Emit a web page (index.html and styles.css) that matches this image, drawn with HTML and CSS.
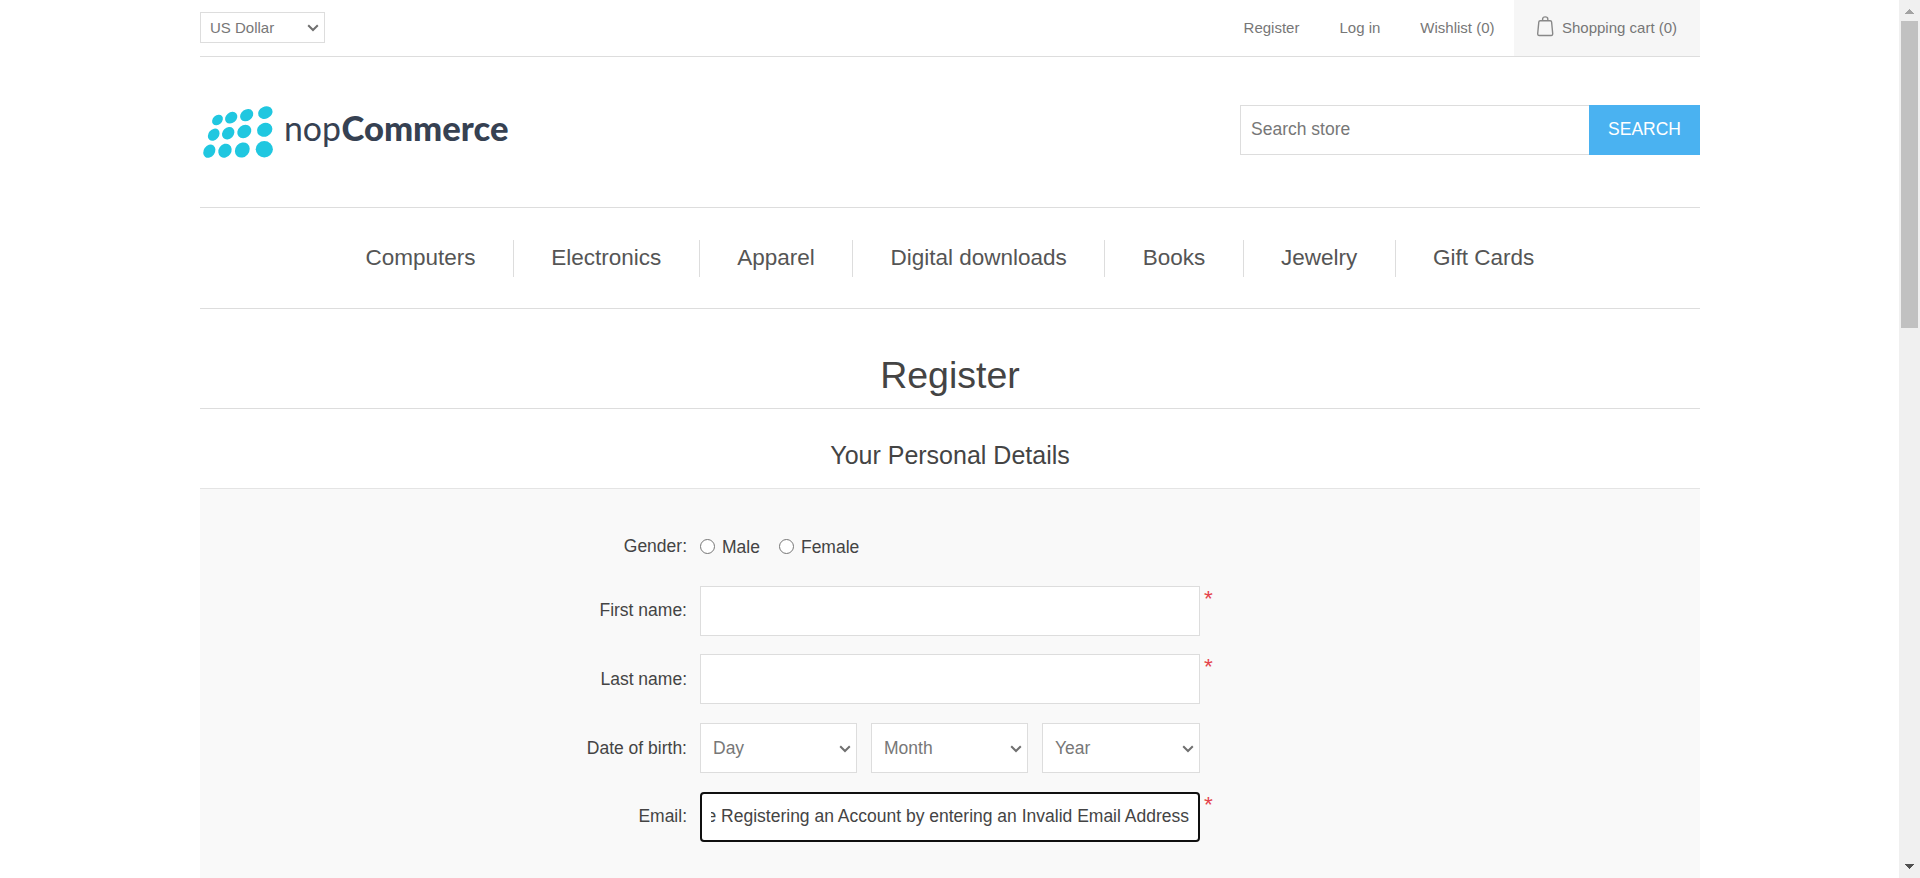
FILE: index.html
```html
<!DOCTYPE html>
<html lang="en">
<head>
<meta charset="utf-8">
<title>Register</title>
<link rel="stylesheet" href="styles.css">
</head>
<body>
<div class="page">
  <div class="wrap">
    <div class="topbar">
      <div class="select currency"><span>US Dollar</span><svg class="chev" width="12" height="8" viewBox="0 0 12 8"><path d="M1.2 1.2 6 6 10.8 1.2"/></svg></div>
      <div class="links">
        <a>Register</a><a>Log in</a><a>Wishlist (0)</a>
        <a class="cart"><svg width="18" height="21" viewBox="0 0 18 21"><path d="M4.200 4.800h10q1.300 0 1.400 1.200l1.100 11.500q.1 2-1.600 2H3.300q-1.700 0-1.600-2L2.800 6q.1-1.200 1.400-1.200zM6.600 4.600V3q0-2.100 2.600-2.100T11.800 3v1.600"/></svg>Shopping cart (0)</a>
      </div>
    </div>
    <header class="header">
      <svg class="logo" width="312" height="62" viewBox="200 100 312 62">
        <g fill="#20c7e0">
          <ellipse cx="217.500" cy="120" rx="6" ry="4.600" transform="rotate(-42 217.500 120)"/>
          <ellipse cx="231.200" cy="117.700" rx="6.700" ry="5.300" transform="rotate(-40 231.200 117.700)"/>
          <ellipse cx="246.700" cy="115.200" rx="7.100" ry="5.600" transform="rotate(-35 246.700 115.200)"/>
          <ellipse cx="265.300" cy="112.600" rx="7.500" ry="6" transform="rotate(-25 265.300 112.600)"/>
          <ellipse cx="213.700" cy="134.700" rx="6.700" ry="5.200" transform="rotate(-50 213.700 134.700)"/>
          <ellipse cx="228.200" cy="133.200" rx="6.800" ry="5.600" transform="rotate(-45 228.200 133.200)"/>
          <ellipse cx="244.300" cy="131.500" rx="7.500" ry="6.300" transform="rotate(-40 244.300 131.500)"/>
          <ellipse cx="264.700" cy="129.800" rx="7.900" ry="6.800" transform="rotate(-25 264.700 129.800)"/>
          <ellipse cx="209.300" cy="151.200" rx="7.100" ry="5.600" transform="rotate(-55 209.300 151.200)"/>
          <ellipse cx="225" cy="150.700" rx="7.400" ry="6.300" transform="rotate(-55 225 150.700)"/>
          <ellipse cx="242.300" cy="150" rx="8" ry="7" transform="rotate(-50 242.300 150)"/>
          <ellipse cx="264.300" cy="149.300" rx="8.600" ry="8.200"/>
        </g>
        <text class="logo-nop" x="284" y="140.500" textLength="57" lengthAdjust="spacingAndGlyphs">nop</text>
        <text class="logo-com" x="341.500" y="140.500" textLength="167" lengthAdjust="spacingAndGlyphs">Commerce</text>
      </svg>
      <form class="search">
        <input type="text" placeholder="Search store"><button type="button">SEARCH</button>
      </form>
    </header>
    <nav class="menu">
      <a>Computers</a><a>Electronics</a><a>Apparel</a><a>Digital downloads</a><a>Books</a><a>Jewelry</a><a>Gift Cards</a>
    </nav>
    <h1>Register</h1>
    <h2>Your Personal Details</h2>
    <div class="fields">
      <div class="row gender"><label>Gender:</label><i class="radio"></i><span class="male">Male</span><i class="radio"></i><span>Female</span></div>
      <div class="row first"><label>First name:</label><input type="text" class="box"><b>*</b></div>
      <div class="row last"><label>Last name:</label><input type="text" class="box"><b>*</b></div>
      <div class="row dob"><label>Date of birth:</label>
        <div class="dates">
          <div class="select"><span>Day</span><svg class="chev" width="12" height="8" viewBox="0 0 12 8"><path d="M1.200 1.200 6 6 10.800 1.200"/></svg></div>
          <div class="select"><span>Month</span><svg class="chev" width="12" height="8" viewBox="0 0 12 8"><path d="M1.200 1.200 6 6 10.800 1.200"/></svg></div>
          <div class="select"><span>Year</span><svg class="chev" width="12" height="8" viewBox="0 0 12 8"><path d="M1.200 1.200 6 6 10.800 1.200"/></svg></div>
        </div>
      </div>
      <div class="row email"><label>Email:</label><div class="box focus"><div class="clip"><span>e Registering an Account by entering an Invalid Email Address</span></div></div><b>*</b></div>
    </div>
  </div>
  <div class="scrollbar">
    <svg width="9" height="5" viewBox="0 0 9 5"><path fill="#a3a3a3" d="M4 0h1v1h1v1h1v1h1v1h1v1H0V4h1V3h1V2h1V1h1z"/></svg>
    <div class="thumb"></div>
    <svg class="down" width="9" height="5" viewBox="0 0 9 5"><path fill="#505050" d="M0 0h9v1H8v1H7v1H6v1H5v1H4V4H3V3H2V2H1V1H0z"/></svg>
  </div>
</div>
</body>
</html>
```
FILE: styles.css
```css
* { box-sizing: border-box; }
body {
  margin: 0;
  background: #fff;
  font: 17.5px "Liberation Sans", Arial, sans-serif;
  color: #444;
  overflow: hidden;
}
.page { display: flex; height: 878px; overflow: hidden; }
.wrap { width: 1500px; margin: 0 199px 0 200px; flex: none; }
.topbar {
  height: 57px;
  border-bottom: 1px solid #ddd;
  display: flex;
  justify-content: space-between;
  font-size: 15px;
  color: #777;
}
.select {
  display: flex;
  align-items: center;
  justify-content: space-between;
  background: #fff;
  border: 1px solid #ddd;
  color: #777;
}
.currency { width: 125px; height: 31px; margin-top: 12px; padding: 0 5px 0 9px; }
.chev { fill: none; stroke: #707070; stroke-width: 2; }
.links { display: flex; line-height: 56px; }
.links a { margin-right: 40px; white-space: nowrap; }
.links a:nth-child(3) { margin-right: 19.5px; }
.links .cart {
  width: 186px;
  margin: 0;
  padding-left: 22px;
  background: #f6f6f6;
  display: flex;
}
.cart svg { margin: 16px 8px 0 0; fill: none; stroke: #888; stroke-width: 1.4; }
.header { height: 150px; display: flex; justify-content: space-between; }
.logo { margin-top: 43px; }
.logo text { font-family: Lato, "Open Sans", sans-serif; font-size: 35px; fill: #364152; }
.logo .logo-com { font-weight: 900; }
.search { display: flex; height: 50px; margin-top: 48px; }
.search input {
  width: 349px;
  border: 1px solid #ddd;
  border-right: 0;
  padding: 0 10px 2px;
  font: inherit;
}
.search input::placeholder { color: #777; opacity: 1; }
.search button {
  width: 111px;
  border: 0;
  padding: 0 0 2px;
  background: #4ab2f1;
  color: #fff;
  font: inherit;
}
.menu {
  height: 102px;
  border: solid #ddd;
  border-width: 1px 0;
  display: flex;
  justify-content: center;
  align-items: center;
  font-size: 22.5px;
  color: #555;
}
.menu a { height: 37px; line-height: 36px; padding: 0 37.5px 0 37.3px; border-left: 1px solid #ddd; }
.menu a:first-child { border: 0; }
h1 {
  margin: 0;
  height: 100px;
  padding-top: 44px;
  border-bottom: 1px solid #ddd;
  font-size: 37.5px;
  line-height: 44px;
  font-weight: 400;
  text-align: center;
}
h2 {
  margin: 0;
  height: 79px;
  padding-top: 32px;
  font-size: 25px;
  line-height: 29px;
  font-weight: 400;
  text-align: center;
}
.fields { height: 400px; border-top: 1px solid #e4e4e4; background: #f9f9f9; padding-top: 37px; }
.row { display: flex; height: 50px; }
.row label { width: 487px; margin-right: 13px; text-align: right; line-height: 48px; }
.gender { height: 41px; align-items: center; margin-bottom: 19px; }
.gender label { line-height: 20px; padding-bottom: 1px; }
.gender span { padding-top: 1px; }
.radio { width: 15px; height: 15px; border: 1px solid #767676; border-radius: 50%; background: #fff; margin-right: 7px; }
.male { margin-right: 19px; }
.first { margin-bottom: 18px; }
.last { margin-bottom: 19px; }
.last label, .dob label { line-height: 50px; }
.dob { margin-bottom: 19px; }
.box { width: 500px; height: 50px; background: #fff; border: 1px solid #ddd; padding: 0; }
.row b { font-weight: 400; font-size: 22.5px; line-height: 26px; color: #e4434b; margin-left: 4px; }
.dates { display: grid; grid-template-columns: 157px 157px 158px; gap: 14px; }
.dates .select { padding: 0 5px 0 12px; }
.dates .chev { margin-top: 1px; }
.focus { border: 2px solid #101010; border-radius: 4px; padding: 0 9px; line-height: 44px; }
.clip { display: flex; justify-content: flex-end; overflow: hidden; white-space: nowrap; }
.scrollbar {
  width: 21px;
  flex: none;
  background: #f0f0f0;
  display: flex;
  flex-direction: column;
  align-items: center;
  padding: 9px 0;
}
.thumb { width: 17px; height: 307px; margin-top: 7px; background: #c1c1c1; }
.down { margin-top: auto; }
```
